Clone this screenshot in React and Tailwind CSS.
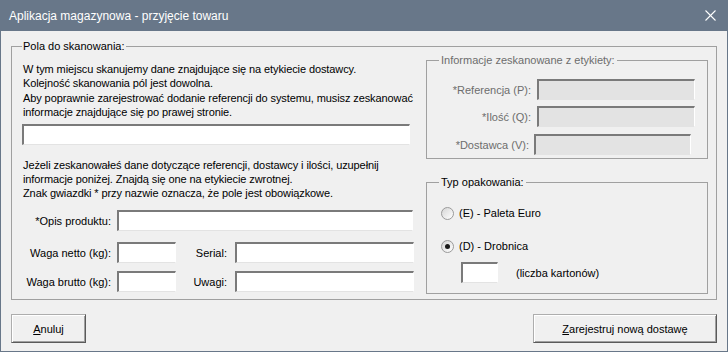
import React from "react";

function Field({ className = "", disabled = false }) {
  return (
    <input
      readOnly
      disabled={disabled}
      className={`h-[21px] border-t-2 border-l-2 border-r border-b border-t-[#7a7a7a] border-l-[#7a7a7a] border-r-white border-b-[#e3e3e3] outline-none ${
        disabled ? "bg-[#e3e3e3]" : "bg-white"
      } ${className}`}
    />
  );
}

function Radio({ checked = false }) {
  return (
    <span className="flex h-[13px] w-[13px] shrink-0 items-center justify-center rounded-full border border-[#9a9a9a] bg-linear-to-br from-[#d6d6d6] to-white">
      {checked && <span className="h-[5px] w-[5px] rounded-full bg-[#1a1a1a]" />}
    </span>
  );
}

function Button({ children, className = "" }) {
  return (
    <button
      className={`h-[29px] border border-[#adadad] border-r-[#5a5a5a] border-b-[#5a5a5a] bg-[#f0f0f0] text-black shadow-[inset_1px_1px_0_#ffffff,inset_-1px_-1px_0_#a0a0a0] ${className}`}
    >
      {children}
    </button>
  );
}

export default function App() {
  return (
    <div className="flex h-[352px] w-[728px] flex-col border-x border-b border-[#687789] bg-[#f0f0f0] font-['Liberation_Sans',Arial,sans-serif] text-[11px] leading-[14px] text-black">
      <div className="flex h-[31px] shrink-0 items-center justify-between bg-[#687789] pl-[8px] pr-[11px] text-[12px] text-white">
        <span>Aplikacja magazynowa - przyjęcie towaru</span>
        <svg width="11" height="11" viewBox="0 0 11 11" stroke="white" strokeWidth="1.1">
          <line x1="0.5" y1="0.5" x2="10.5" y2="10.5" />
          <line x1="10.5" y1="0.5" x2="0.5" y2="10.5" />
        </svg>
      </div>

      <div className="flex flex-1 flex-col px-[10px] pt-[8px]">
        <fieldset className="border border-[#a0a0a0] pb-[5px] pl-[10px] pr-[8px]">
          <legend className="px-[1px] leading-[14px]">Pola do skanowania:</legend>
          <div className="flex justify-between">
            <div className="flex w-[392px] flex-col">
              <p className="mt-[9px] whitespace-nowrap pl-[1px] leading-[14.3px] tracking-[-0.1px]">
                W tym miejscu skanujemy dane znajdujące się na etykiecie dostawcy.
                <br />
                Kolejność skanowania pól jest dowolna.
                <br />
                Aby poprawnie zarejestrować dodanie referencji do systemu, musisz zeskanować
                <br />
                informacje znajdujące się po prawej stronie.
              </p>
              <Field className="mt-[5px] h-[20px] w-[388px]" />
              <p className="mt-[13px] whitespace-nowrap pl-[1px] leading-[14px] tracking-[-0.1px]">
                Jeżeli zeskanowałeś dane dotyczące referencji, dostawcy i ilości, uzupełnij
                <br />
                informacje poniżej. Znajdą się one na etykiecie zwrotnej.
                <br />
                Znak gwiazdki * przy nazwie oznacza, że pole jest obowiązkowe.
              </p>
              <div className="mt-[10px] flex items-center">
                <span className="w-[89px] whitespace-nowrap text-right">*Opis produktu:</span>
                <Field className="ml-[6px] w-[296px]" />
              </div>
              <div className="mt-[11px] flex items-center">
                <span className="w-[89px] whitespace-nowrap text-right">Waga netto (kg):</span>
                <Field className="ml-[6px] w-[59px]" />
                <span className="w-[51px] text-right">Serial:</span>
                <Field className="ml-[8px] w-[179px]" />
              </div>
              <div className="mt-[8px] flex items-center">
                <span className="w-[89px] whitespace-nowrap text-right">Waga brutto (kg):</span>
                <Field className="ml-[6px] w-[59px]" />
                <span className="w-[51px] text-right">Uwagi:</span>
                <Field className="ml-[8px] w-[179px]" />
              </div>
            </div>

            <div className="flex w-[282px] flex-col">
              <fieldset className="border border-[#a0a0a0] pb-[3px] pl-[12px] pr-[12px]">
                <legend className="px-[2px] text-[#6d6d6d]">Informacje zeskanowane z etykiety:</legend>
                <div className="mt-[12px] flex items-center">
                  <span className="w-[92px] text-right text-[#6d6d6d]">*Referencja (P):</span>
                  <Field disabled className="ml-[6px] w-[158px]" />
                </div>
                <div className="mt-[6px] flex items-center">
                  <span className="w-[92px] text-right text-[#6d6d6d]">*Ilość (Q):</span>
                  <Field disabled className="ml-[6px] w-[158px]" />
                </div>
                <div className="mt-[7px] flex items-center">
                  <span className="w-[90px] text-right text-[#6d6d6d]">*Dostawca (V):</span>
                  <Field disabled className="ml-[5px] w-[157px]" />
                </div>
              </fieldset>

              <fieldset className="mt-[16px] border border-[#a0a0a0] pb-[10px] pl-[14px] pr-[12px]">
                <legend className="-ml-[2px] px-[2px]">Typ opakowania:</legend>
                <label className="mt-[17px] flex items-center gap-[5px]">
                  <Radio />
                  <span>(E) - Paleta Euro</span>
                </label>
                <label className="mt-[19px] flex items-center gap-[5px]">
                  <Radio checked />
                  <span>(D) - Drobnica</span>
                </label>
                <div className="mt-[9px] flex items-center">
                  <Field className="ml-[20px] w-[37px]" />
                  <span className="ml-[18px]">(liczba kartonów)</span>
                </div>
              </fieldset>
            </div>
          </div>
        </fieldset>

        <div className="mt-[14px] flex justify-between">
          <Button className="w-[75px]">
            <span className="underline">A</span>nuluj
          </Button>
          <Button className="w-[184px]">
            <span className="underline">Z</span>arejestruj nową dostawę
          </Button>
        </div>
      </div>
    </div>
  );
}
